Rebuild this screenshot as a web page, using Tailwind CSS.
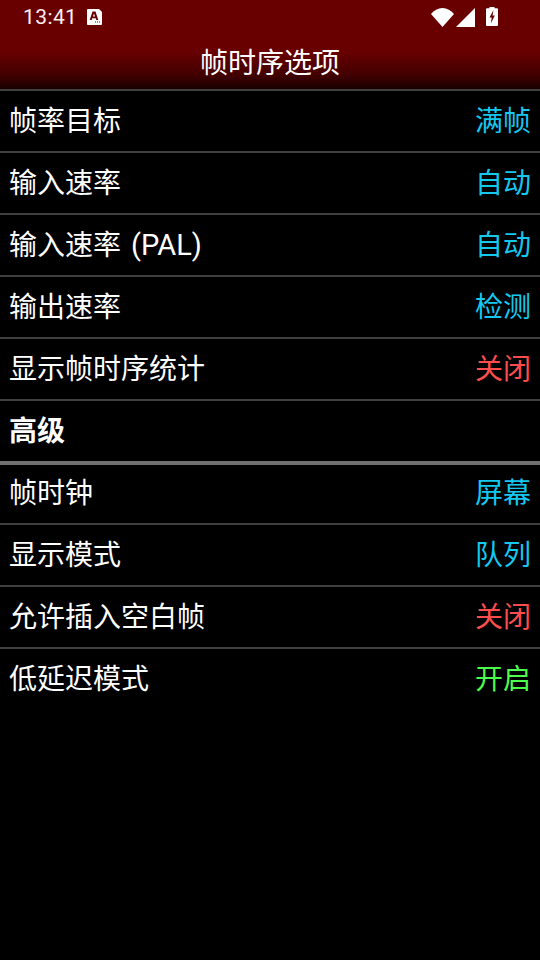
<!DOCTYPE html>
<html lang="zh-CN">
<head>
    <meta charset="UTF-8">
    <meta name="viewport" content="width=device-width, initial-scale=1.0">
    <title>帧时序选项</title>
    <script src="https://cdn.jsdelivr.net/npm/@tailwindcss/browser@4"></script>
</head>
<body class="bg-black w-[540px] h-[960px] overflow-hidden font-['Roboto','Noto_Sans_CJK_SC',sans-serif] text-white">
    <!-- action bar -->
    <header class="h-[89px] bg-[linear-gradient(to_bottom,#680000_0px,#680000_52px,#400000_76px,#180000_89px)] flex flex-col">
        <div class="h-[34px] flex items-center pl-[23px] pr-[42px]">
            <span class="text-[21px] leading-none tracking-[0.4px] text-[#f8f0f0]">13:41</span>
            <svg class="ml-[10px]" width="15" height="16" viewBox="0 0 15 16">
                <path d="M1 0H12L15 3V15a1 1 0 0 1-1 1H1a1 1 0 0 1-1-1V1a1 1 0 0 1 1-1z" fill="#fff"/>
                <path d="M5.500 2.500h3l2.800 8.500H9.300l-.5-1.700H5.200L4.700 11H2.700zm1.500 2L6 7.500h2z" fill="#680000"/>
                <path d="M8 12.500h1v1H8zM10 12.500h1v1H10zM12 12.500h1v1H12z" fill="#680000"/>
            </svg>
            <div class="ml-auto flex items-start h-[20px]">
                <svg class="mt-[1px]" width="23" height="19" viewBox="0 0 23 19"><path d="M0 6C3 2.500 7 0 11.500 0S20 2.500 23 6L11.500 19z" fill="#fff"/></svg>
                <svg class="mt-[1px] ml-[2px]" width="19" height="19" viewBox="0 0 19 19"><path d="M0 19L19 0V19z" fill="#fff"/></svg>
                <svg class="ml-[11px]" width="12" height="19" viewBox="0 0 12 19"><path d="M3.500 0h5v1.200H11a1 1 0 0 1 1 1V18a1 1 0 0 1-1 1H1a1 1 0 0 1-1-1V2.200a1 1 0 0 1 1-1h2.500z" fill="#fff"/><path d="M7.500 3L3.500 10.500H5.700L4.800 16.500L8.800 8.500H6.500z" fill="#680000"/></svg>
            </div>
        </div>
        <h1 class="flex-1 flex items-center justify-center text-[28px] leading-none pt-[4px]">帧时序选项</h1>
    </header>

    <main>
        <div class="h-[62px] pt-[2px] border-t-2 border-[#404040] flex items-center justify-between px-[9px] text-[28px]"><span>帧率目标</span><span class="text-[#14c8f0]">满帧</span></div>
        <div class="h-[62px] pt-[2px] border-t-2 border-[#404040] flex items-center justify-between px-[9px] text-[28px]"><span>输入速率</span><span class="text-[#14c8f0]">自动</span></div>
        <div class="h-[62px] pt-[2px] border-t-2 border-[#404040] flex items-center justify-between px-[9px] text-[28px]"><span>输入速率<span class="ml-[10px] text-[29px]">(PAL)</span></span><span class="text-[#14c8f0]">自动</span></div>
        <div class="h-[62px] pt-[2px] border-t-2 border-[#404040] flex items-center justify-between px-[9px] text-[28px]"><span>输出速率</span><span class="text-[#14c8f0]">检测</span></div>
        <div class="h-[62px] pt-[2px] border-t-2 border-[#404040] flex items-center justify-between px-[9px] text-[28px]"><span>显示帧时序统计</span><span class="text-[#ff4d4d]">关闭</span></div>
        <div class="h-[62px] pt-[2px] border-t-2 border-[#404040] flex items-center px-[9px] text-[28px] font-bold"><span>高级</span></div>
        <div class="h-[62px] border-t-4 border-[#707070] flex items-center justify-between px-[9px] text-[28px]"><span>帧时钟</span><span class="text-[#14c8f0]">屏幕</span></div>
        <div class="h-[62px] pt-[2px] border-t-2 border-[#404040] flex items-center justify-between px-[9px] text-[28px]"><span>显示模式</span><span class="text-[#14c8f0]">队列</span></div>
        <div class="h-[62px] pt-[2px] border-t-2 border-[#404040] flex items-center justify-between px-[9px] text-[28px]"><span>允许插入空白帧</span><span class="text-[#ff4d4d]">关闭</span></div>
        <div class="h-[62px] pt-[2px] border-t-2 border-[#404040] flex items-center justify-between px-[9px] text-[28px]"><span>低延迟模式</span><span class="text-[#4dff4d]">开启</span></div>
    </main>
</body>
</html>
